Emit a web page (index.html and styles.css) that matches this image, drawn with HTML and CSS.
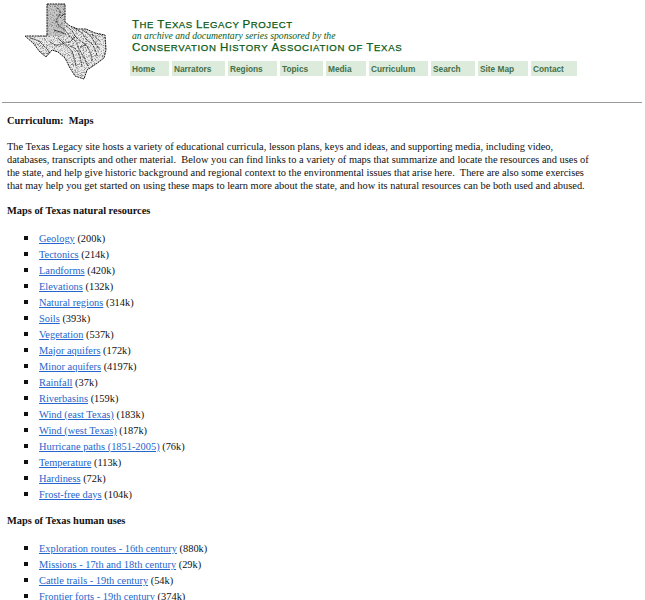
FILE: index.html
```html
<!DOCTYPE html>
<html lang="en">
<head>
<meta charset="utf-8">
<title>Curriculum: Maps</title>
<link rel="stylesheet" href="styles.css">
</head>
<body>
<header class="masthead">
  <svg class="logo" width="90" height="85" viewBox="0 0 90 85">
    <defs>
      <clipPath id="tx"><path d="M27 4 L45 4 L45 22 L50 26 L58 29 L66 29 L75 33 L85 35 L86 50 L84 58 L76 64 L67 70 L64 79 L55 76 L50 68 L45 58 L38 52 L32 50 L26 57 L20 52 L13 43 L5 36 L27 36 Z"/></clipPath>
      <filter id="speck" x="0" y="0" width="100%" height="100%">
        <feTurbulence type="fractalNoise" baseFrequency="0.9" numOctaves="2" seed="4"/>
        <feColorMatrix type="matrix" values="0 0 0 0 0.2  0 0 0 0 0.2  0 0 0 0 0.2  2.6 2.6 0 0 -2.5"/>
      </filter>
      <filter id="soft" x="-5%" y="-5%" width="110%" height="110%"><feGaussianBlur stdDeviation="0.35"/></filter>
    </defs>
    <g filter="url(#soft)">
      <g clip-path="url(#tx)">
        <rect class="land" width="90" height="85"/>
        <rect class="pan" x="27" y="4" width="18" height="32"/>
        <rect width="90" height="85" filter="url(#speck)"/>
      </g>
      <path class="river" d="M37 8 Q44 11 36 20 Q38 26 42 28 T50 37 Q56 40 57 44 T62 54 L68 66 M44 14 L40 18 M46 26 Q52 30 54 34 T62 42 Q68 46 70 52 T72 62 M54 28 Q62 32 64 36 T72 44 Q76 50 77 56 M62 30 Q70 34 72 38 T80 50 M72 34 L81 42 M30 42 Q36 46 38 45 T44 44 Q50 48 52 52 T56 66 M10 38 Q18 40 20 42 T28 50 L30 54 M44 44 L38 38 M50 46 Q56 48 58 52 T62 66 M34 30 L46 34 M56 36 L50 42 L46 42 M66 44 L60 48"/>
      <path class="state" d="M27 4 L45 4 L45 22 L50 26 L58 29 L66 29 L75 33 L85 35 L86 50 L84 58 L76 64 L67 70 L64 79 L55 76 L50 68 L45 58 L38 52 L32 50 L26 57 L20 52 L13 43 L5 36 L27 36 Z"/>
    </g>
  </svg>
  <div class="brand">
    <div class="title-line"><span class="big">T</span>he <span class="big">T</span>exas <span class="big">L</span>egacy <span class="big">P</span>roject</div>
    <div class="tagline">an archive and documentary series sponsored by the</div>
    <div class="title-line org"><span class="big">C</span>onservation <span class="big">H</span>istory <span class="big">A</span>ssociation of <span class="big">T</span>exas</div>
    <nav class="nav">
      <a class="n-home" href="#">Home</a>
      <a class="n-narr" href="#">Narrators</a>
      <a class="n-regi" href="#">Regions</a>
      <a class="n-topi" href="#">Topics</a>
      <a class="n-medi" href="#">Media</a>
      <a class="n-curr" href="#">Curriculum</a>
      <a class="n-sear" href="#">Search</a>
      <a class="n-site" href="#">Site Map</a>
      <a class="n-cont" href="#">Contact</a>
    </nav>
  </div>
</header>
<hr class="rule">
<main class="content">
  <h1>Curriculum:&nbsp; Maps</h1>
  <p>The Texas Legacy site hosts a variety of educational curricula, lesson plans, keys and ideas, and supporting media, including video, databases, transcripts and other material.&nbsp; Below you can find links to a variety of maps that summarize and locate the resources and uses of the state, and help give historic background and regional context to the environmental issues that arise here.&nbsp; There are also some exercises that may help you get started on using these maps to learn more about the state, and how its natural resources can be both used and abused.</p>
  <h2>Maps of Texas natural resources</h2>
  <ul>
    <li><a href="#">Geology</a> (200k)</li>
    <li><a href="#">Tectonics</a> (214k)</li>
    <li><a href="#">Landforms</a> (420k)</li>
    <li><a href="#">Elevations</a> (132k)</li>
    <li><a href="#">Natural regions</a> (314k)</li>
    <li><a href="#">Soils</a> (393k)</li>
    <li><a href="#">Vegetation</a> (537k)</li>
    <li><a href="#">Major aquifers</a> (172k)</li>
    <li><a href="#">Minor aquifers</a> (4197k)</li>
    <li><a href="#">Rainfall</a> (37k)</li>
    <li><a href="#">Riverbasins</a> (159k)</li>
    <li><a href="#">Wind (east Texas)</a> (183k)</li>
    <li><a href="#">Wind (west Texas)</a> (187k)</li>
    <li><a href="#">Hurricane paths (1851-2005)</a> (76k)</li>
    <li><a href="#">Temperature</a> (113k)</li>
    <li><a href="#">Hardiness</a> (72k)</li>
    <li><a href="#">Frost-free days</a> (104k)</li>
  </ul>
  <h2 class="second">Maps of Texas human uses</h2>
  <ul>
    <li><a href="#">Exploration routes - 16th century</a> (880k)</li>
    <li><a href="#">Missions - 17th and 18th century</a> (29k)</li>
    <li><a href="#">Cattle trails - 19th century</a> (54k)</li>
    <li><a href="#">Frontier forts - 19th century</a> (374k)</li>
  </ul>
</main>
</body>
</html>
```
FILE: styles.css
```css
html, body { margin: 0; padding: 0; background: #fff; }
body {
  font-family: "Liberation Serif", "Times New Roman", serif;
  font-size: 10.4px;
  color: #111;
  height: 600px;
  overflow: hidden;
}
.masthead { display: flex; height: 102px; }
.logo { margin-left: 20px; flex: none; }
.brand { margin-left: 22px; padding-top: 18px; }
.title-line {
  font-family: "Liberation Sans", Arial, sans-serif;
  text-transform: uppercase;
  font-size: 9.6px;
  height: 12px;
  line-height: 12px;
  color: #0c5a14;
  letter-spacing: 0.57px;
  -webkit-text-stroke: 0.25px #0c5a14;
  white-space: nowrap;
}
.big { font-size: 11.5px; }
.org { letter-spacing: 0.67px; }
.tagline {
  font-style: italic;
  font-size: 9.7px;
  line-height: 11px;
  color: #0c5a14;
  white-space: nowrap;
}
.nav { display: flex; gap: 3.5px; margin-top: 8px; margin-left: -2px; }
.nav a {
  display: block;
  box-sizing: border-box;
  height: 15px;
  line-height: 16px;
  padding-left: 2px;
  background: #dcebdc;
  color: #44704a;
  font-family: "Liberation Sans", Arial, sans-serif;
  font-size: 8.3px;
  font-weight: bold;
  text-decoration: none;
}
.n-home { width: 38.5px; }
.n-narr { width: 52.5px; }
.n-regi { width: 48.5px; }
.n-topi { width: 42.5px; }
.n-medi { width: 39.5px; }
.n-curr { width: 58.5px; }
.n-sear { width: 43.5px; }
.n-site { width: 49.5px; }
.n-cont { width: 46px; }
.land { fill: #ececec; }
.pan { fill: #c8c8c8; }
.state { fill: none; stroke: #1a1a1a; stroke-width: 1; stroke-dasharray: 2 0.7; }
.river { fill: none; stroke: #222; stroke-width: 0.8; stroke-dasharray: 3 0.8; }
.rule { margin: 0 3px 0 2px; border: 0; border-top: 1px solid #999; height: 0; }
.content { padding: 0 50px 0 7px; }
h1, h2 { font-size: 10.4px; line-height: 13px; margin: 0; }
h1 { padding-top: 11px; }
p { margin: 13px 0 0; line-height: 13px; }
h2 { margin-top: 12px; }
h2.second { margin-top: 12px; }
ul { list-style: square; margin: 13px 0 0; padding: 0 0 0 32px; }
li { height: 16px; line-height: 16px; }
li::marker { font-size: 13px; }
a { color: #2466cc; }
```
